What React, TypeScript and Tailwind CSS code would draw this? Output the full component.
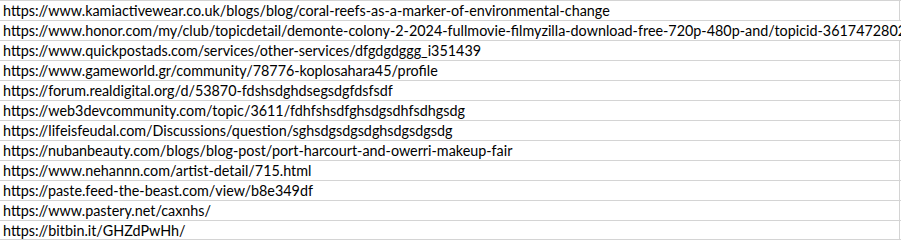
const urls = [
  "https://www.kamiactivewear.co.uk/blogs/blog/coral-reefs-as-a-marker-of-environmental-change",
  "https://www.honor.com/my/club/topicdetail/demonte-colony-2-2024-fullmovie-filmyzilla-download-free-720p-480p-and/topicid-361747280268401/",
  "https://www.quickpostads.com/services/other-services/dfgdgdggg_i351439",
  "https://www.gameworld.gr/community/78776-koplosahara45/profile",
  "https://forum.realdigital.org/d/53870-fdshsdghdsegsdgfdsfsdf",
  "https://web3devcommunity.com/topic/3611/fdhfshsdfghsdgsdhfsdhgsdg",
  "https://lifeisfeudal.com/Discussions/question/sghsdgsdgsdghsdgsdgsdg",
  "https://nubanbeauty.com/blogs/blog-post/port-harcourt-and-owerri-makeup-fair",
  "https://www.nehannn.com/artist-detail/715.html",
  "https://paste.feed-the-beast.com/view/b8e349df",
  "https://www.pastery.net/caxnhs/",
  "https://bitbin.it/GHZdPwHh/",
]

export default function App() {
  return (
    <div className="w-[901px] h-[241px] overflow-hidden bg-white font-['Lato',sans-serif] text-[14.35px] text-black">
      {urls.map((url, i) => {
        // row 2 spills over the cell edge, as in the sheet
        const overflow = i === 1
        return (
          <div
            key={i}
            className={
              "h-[20px] border-t border-[#d4d4d4] " +
              (i === urls.length - 1 ? "border-b" : "")
            }
          >
            <div
              className={
                "h-[19px] w-[900px] pl-[3px] leading-[20px] whitespace-nowrap " +
                (overflow ? "" : "border-r border-[#d4d4d4]")
              }
            >
              {url}
            </div>
          </div>
        )
      })}
    </div>
  )
}
